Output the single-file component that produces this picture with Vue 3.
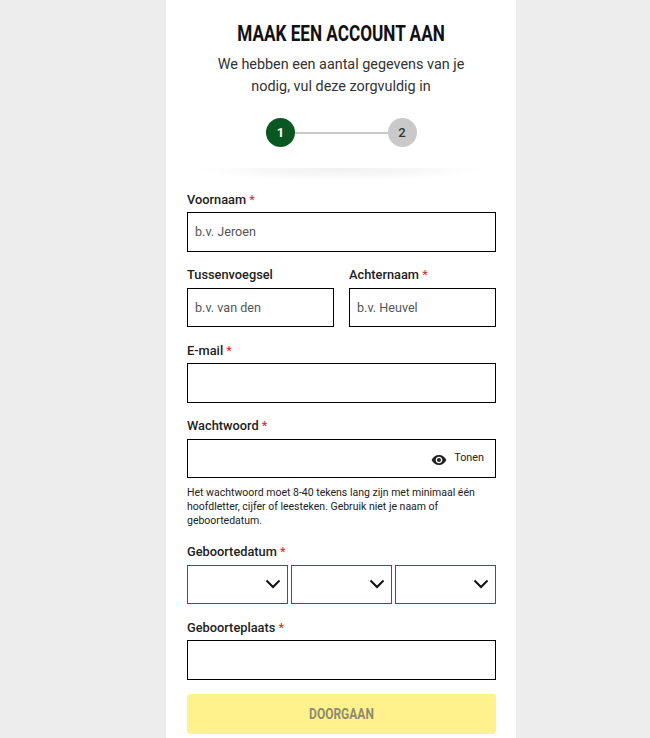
<template>
  <main class="card">
    <header class="head">
      <h1 class="title">MAAK EEN ACCOUNT AAN</h1>
      <p class="intro">We hebben een aantal gegevens van je<br />nodig, vul deze zorgvuldig in</p>
      <div class="steps">
        <span class="step active">1</span>
        <span class="line"></span>
        <span class="step">2</span>
      </div>
    </header>
    <form class="form" @submit.prevent>
      <div class="field">
        <label class="label">Voornaam <i>*</i></label>
        <div class="input"><span class="ph">b.v. Jeroen</span></div>
      </div>
      <div class="row">
        <div class="field">
          <label class="label">Tussenvoegsel</label>
          <div class="input"><span class="ph">b.v. van den</span></div>
        </div>
        <div class="field">
          <label class="label">Achternaam <i>*</i></label>
          <div class="input"><span class="ph">b.v. Heuvel</span></div>
        </div>
      </div>
      <div class="field">
        <label class="label">E-mail <i>*</i></label>
        <div class="input"></div>
      </div>
      <div class="field pw">
        <label class="label">Wachtwoord <i>*</i></label>
        <div class="input right">
          <svg class="eye" viewBox="0 0 24 24" width="16" height="16" aria-hidden="true">
            <path fill="#222" d="M12 4.5C7 4.5 2.73 7.61 1 12c1.73 4.39 6 7.5 11 7.5s9.27-3.11 11-7.5c-1.73-4.39-6-7.5-11-7.5zM12 17c-2.76 0-5-2.24-5-5s2.24-5 5-5 5 2.24 5 5-2.24 5-5 5zm0-8c-1.66 0-3 1.34-3 3s1.34 3 3 3 3-1.34 3-3-1.34-3-3-3z"/>
          </svg>
          <span class="show">Tonen</span>
        </div>
        <p class="help">Het wachtwoord moet 8-40 tekens lang zijn met minimaal één hoofdletter, cijfer of leesteken. Gebruik niet je naam of geboortedatum.</p>
      </div>
      <div class="field">
        <label class="label">Geboortedatum <i>*</i></label>
        <div class="dates">
          <div v-for="n in 3" :key="n" class="input select">
            <svg viewBox="0 0 16 10" width="16" height="10" aria-hidden="true">
              <path d="M1.5 1.5 8 8l6.5-6.5" fill="none" stroke="#111" stroke-width="2"/>
            </svg>
          </div>
        </div>
      </div>
      <div class="field last">
        <label class="label">Geboorteplaats <i>*</i></label>
        <div class="input"></div>
      </div>
      <button class="submit" type="button"><span class="submit-text">DOORGAAN</span></button>
    </form>
  </main>
</template>

<script setup>
</script>

<style>
html, body { margin: 0; background: #ededed; }
</style>

<style scoped>
* { box-sizing: border-box; }
.card {
  width: 350px;
  height: 738px;
  margin-left: 166px;
  background: #fff;
  overflow: hidden;
  font-family: Roboto, "Liberation Sans", sans-serif;
  color: #222;
}
.head {
  position: relative;
  height: 168px;
  padding-top: 21px;
  text-align: center;
}
.head::after {
  content: "";
  position: absolute;
  top: 100%;
  left: 30px;
  right: 30px;
  height: 13px;
  background: radial-gradient(ellipse 50% 100% at 50% 0, rgba(0, 0, 0, 0.055), rgba(0, 0, 0, 0.03) 55%, rgba(0, 0, 0, 0) 100%);
}
.title {
  margin: 0;
  font-weight: 700;
  font-size: 22px;
  line-height: 25px;
  color: #111;
  transform: scaleX(0.78);
}
.intro {
  margin: 8px 0 0;
  font-size: 14.4px;
  line-height: 22px;
  color: #333;
}
.steps {
  display: flex;
  align-items: center;
  justify-content: center;
  margin-top: 20px;
}
.step {
  width: 29px;
  height: 29px;
  border-radius: 50%;
  background: #c9c9c9;
  color: #333;
  font-size: 13px;
  font-weight: 500;
  display: flex;
  align-items: center;
  justify-content: center;
}
.step.active { background: #0a5722; color: #fff; font-weight: 700; padding-left: 1px; }
.line { width: 93px; height: 2px; background: #c9c9c9; }
.form { padding: 22.8px 20px 0 21px; }
.field { margin-bottom: 14.4px; }
.label {
  display: block;
  height: 21.6px;
  font-size: 12.8px;
  font-weight: 500;
  line-height: 17px;
  color: #222;
}
.label i { font-style: normal; color: #d9262e; font-weight: 400; }
.input {
  height: 39.5px;
  border: 1px solid #000;
  background: #fff;
  padding: 0 7px;
  display: flex;
  align-items: center;
}
.ph { font-size: 12.6px; color: #555; margin-top: -1px; }
.row { display: grid; grid-template-columns: 147px 147px; column-gap: 15px; }
.right { justify-content: flex-end; padding-right: 11px; }
.eye { margin-right: 7px; margin-top: 2px; }
.show { font-size: 10.8px; color: #222; margin-top: -3px; }
.pw { margin-bottom: 14.8px; }
.help {
  margin: 8px 0 0;
  font-size: 10.5px;
  line-height: 14px;
  color: #222;
}
.dates { display: grid; grid-template-columns: repeat(3, 101px); column-gap: 3px; }
.input.select { border: 1px solid #0f6f58; justify-content: flex-end; padding-right: 6px; }
.last { margin-bottom: 14.2px; }
.submit {
  display: block;
  width: 100%;
  height: 40px;
  padding: 1px 0 0;
  border: 0;
  border-radius: 4px;
  background: #fff28c;
  font-family: Roboto, sans-serif;
}
.submit-text {
  display: block;
  color: #8f8a72;
  font-size: 15px;
  font-weight: 700;
  transform: scaleX(0.8);
}
</style>
